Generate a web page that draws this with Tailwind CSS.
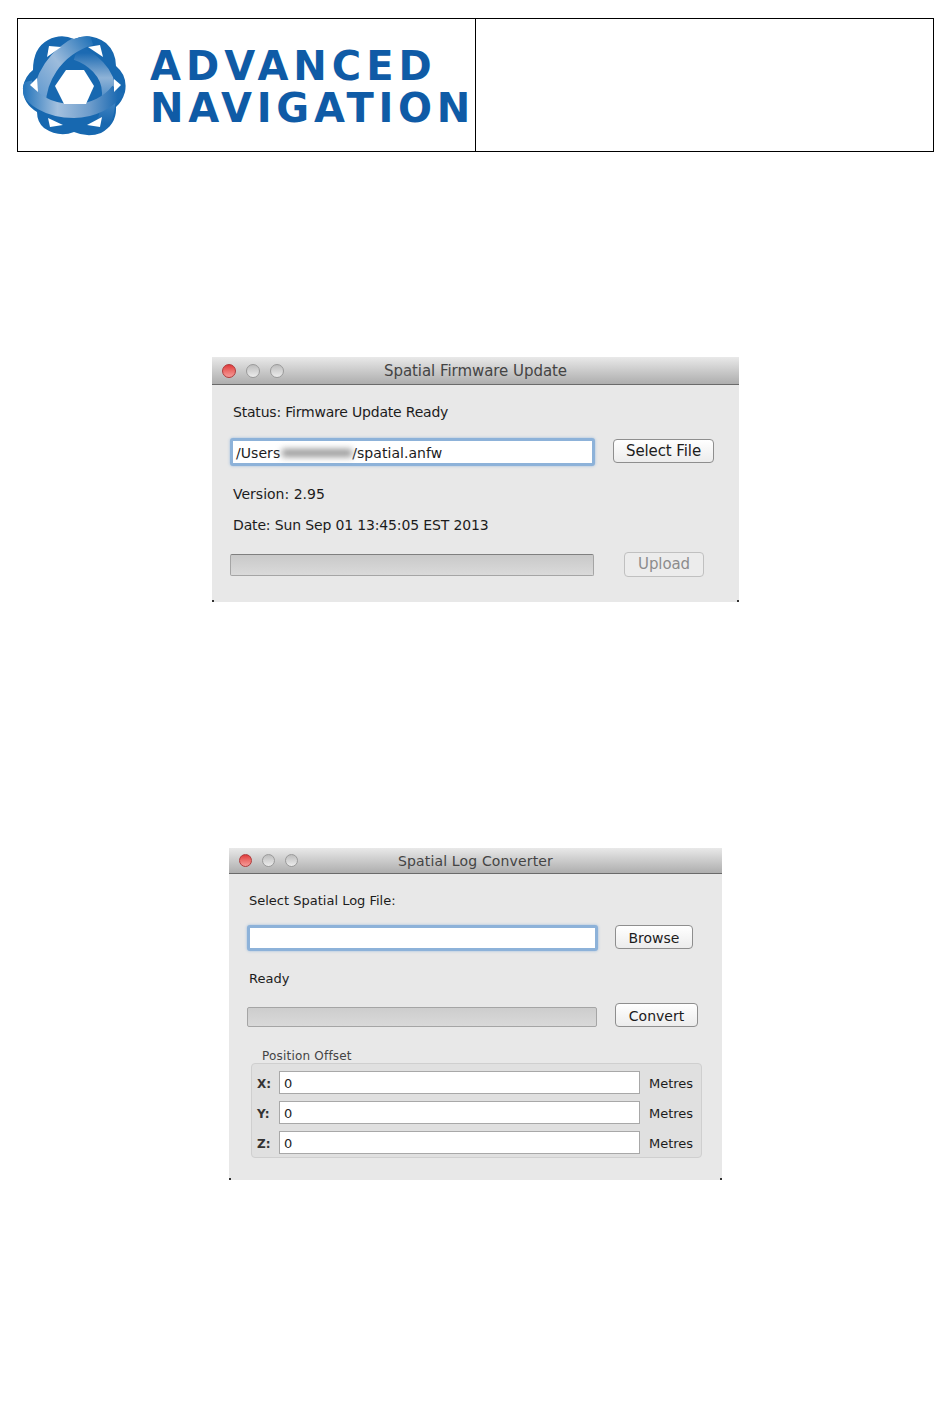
<!DOCTYPE html>
<html lang="en">
  <head>
    <meta charset="UTF-8">
    <script src="https://cdn.jsdelivr.net/npm/@tailwindcss/browser@4"></script>
    <title>Spatial Firmware Update</title>
  </head>
  <body class="bg-white w-[950px] h-[1419px] overflow-hidden font-['DejaVu_Sans',sans-serif] text-[#1c1c1c]">
    <!-- Page header -->
    <div class="ml-[17px] mt-[18px] w-[917px] h-[134px] border border-black flex">
      <div class="w-[458px] h-full border-r border-black flex items-center shrink-0">
        <svg class="ml-[4px] shrink-0" width="106" height="102" viewBox="21 34 106 102" fill="none">
          <defs>
            <linearGradient id="bandA" x1="0" y1="0" x2="1" y2="0">
              <stop offset="0" stop-color="#2a78bd"/><stop offset="0.35" stop-color="#a3c0de"/><stop offset="0.7" stop-color="#6d9ccb"/><stop offset="1" stop-color="#1c6ab2"/>
            </linearGradient>
            <linearGradient id="bandB" x1="0" y1="1" x2="1" y2="0">
              <stop offset="0" stop-color="#5d97ce"/><stop offset="0.5" stop-color="#9dbcdc"/><stop offset="1" stop-color="#2272b8"/>
            </linearGradient>
            <linearGradient id="bandC" x1="0" y1="0" x2="0" y2="1">
              <stop offset="0" stop-color="#1c6ab2"/><stop offset="0.35" stop-color="#8fb3d7"/><stop offset="0.7" stop-color="#3f83c2"/><stop offset="1" stop-color="#1766ae"/>
            </linearGradient>
            <clipPath id="logoEdge">
              <path d="M47 40 Q60 33 73 39 Q90 32 105 43 Q115 52 115 66 Q127 76 124 92 Q121 102 115 107 Q116 124 100 133 Q87 138 73 132 Q58 138 43 128 Q36 122 36 112 Q21 103 22 87 Q24 76 32 70 Q32 48 47 40 Z"/>
            </clipPath>
          </defs>
          <g clip-path="url(#logoEdge)">
            <rect x="21" y="32" width="106" height="106" fill="#1768b0"/>
            <path d="M75 53 C90 58 108 72 108 93 C108 105 106 115 102 124" stroke="url(#bandC)" stroke-width="14"/>
            <path d="M38 104 C38 82 52 50 90 38" stroke="url(#bandB)" stroke-width="14"/>
            <path d="M24 82 C28 100 48 111 73 111 C92 111 108 102 117 90" stroke="url(#bandA)" stroke-width="14"/>
          </g>
          <g fill="#fff">
            <path d="M46 57 L48 46 L60 47 Z"/>
            <path d="M87 47 L99 45 L102 57 Z"/>
            <path d="M113 79 L120 85 L113 92 Z"/>
            <path d="M29 85 L36 78 L37 92 Z"/>
            <path d="M47 118 L62 125 L49 127 Z"/>
            <path d="M86 125 L101 117 L99 127 Z"/>
          </g>
          <path d="M54 86 L65 70 L83 70 L93 86 L85 104 L63 104 Z" fill="#fff"/>
        </svg>
        <div class="ml-[22px] pt-[4px] font-['DejaVu_Sans',sans-serif] font-bold text-[#0f5ba6] leading-[42px] text-[40px]">
          <div class="tracking-[5px] whitespace-nowrap h-[42px]">ADVANCED</div>
          <div class="tracking-[4.7px] whitespace-nowrap h-[42px]">NAVIGATION</div>
        </div>
      </div>
      <div class="flex-1"></div>
    </div>

    <!-- Firmware update window -->
    <div class="relative ml-[212px] mt-[205px] w-[527px] h-[245px] bg-[#e8e8e8]">
      <div class="absolute left-0 top-0 w-[2px] h-[2px] bg-[#333]"></div>
      <div class="absolute right-0 top-0 w-[2px] h-[2px] bg-[#333]"></div>
      <div class="absolute left-0 bottom-0 w-[2px] h-[2px] bg-[#333]"></div>
      <div class="absolute right-0 bottom-0 w-[2px] h-[2px] bg-[#333]"></div>
      <div class="relative h-[28px] bg-gradient-to-b from-[#e9e9e9] to-[#aeaeae] border-b border-[#6a6a6a] flex items-center pl-[10px] gap-[10px]">
        <div class="w-[14px] h-[14px] rounded-full border border-[#b03a3a] bg-gradient-to-b from-[#e0383c] to-[#f49a98]"></div>
        <div class="w-[14px] h-[14px] rounded-full border border-[#9a9a9a] bg-gradient-to-b from-[#bdbdbd] to-[#ececec]"></div>
        <div class="w-[14px] h-[14px] rounded-full border border-[#9a9a9a] bg-gradient-to-b from-[#bdbdbd] to-[#ececec]"></div>
        <div class="absolute inset-0 pt-[2px] flex items-center justify-center text-[15px] tracking-[-0.05px] text-[#444]">Spatial Firmware Update</div>
      </div>
      <div class="pl-[18px] pt-[16px]">
        <div class="ml-[3px] h-[22px] leading-[22px] text-[14px] tracking-[-0.2px]">Status: Firmware Update Ready</div>
        <div class="mt-[15px] flex items-start">
          <div class="w-[365px] h-[28px] pt-[2px] bg-white border-[3px] border-[#8db2d9] rounded-[3px] shadow-[0_0_3px_#9dbbdc] flex items-center pl-[3px] text-[14px] tracking-[0.05px]">
            <span>/Users</span>
            <span class="w-[70px] h-[8px] mx-[2px] bg-[#999] blur-[3px]"></span>
            <span class="-ml-[2px]">/spatial.anfw</span>
          </div>
          <div class="ml-[18px] mt-[1px] w-[101px] h-[24px] bg-gradient-to-b from-white to-[#ececec] border border-[#8e8e8e] rounded-[4px] flex items-center justify-center text-[15px] tracking-[-0.1px]">Select File</div>
        </div>
        <div class="ml-[3px] mt-[17px] h-[22px] leading-[22px] text-[14px]">Version: 2.95</div>
        <div class="ml-[3px] mt-[9px] h-[22px] leading-[22px] text-[14px] tracking-[-0.15px]">Date: Sun Sep 01 13:45:05 EST 2013</div>
        <div class="mt-[16px] flex items-start">
          <div class="mt-[2px] w-[364px] h-[22px] bg-gradient-to-b from-[#c9c9c9] to-[#dadada] border border-[#a5a5a5] border-t-[#7f7f7f] rounded-[2px]"></div>
          <div class="ml-[30px] w-[80px] h-[25px] bg-[#ececec] border border-[#c0c0c0] rounded-[4px] flex items-center justify-center text-[15px] tracking-[-0.1px] text-[#8c8c8c]">Upload</div>
        </div>
      </div>
    </div>

    <!-- Log converter window -->
    <div class="relative ml-[229px] mt-[246px] w-[493px] h-[332px] bg-[#e8e8e8]">
      <div class="absolute left-0 top-0 w-[2px] h-[2px] bg-[#333]"></div>
      <div class="absolute right-0 top-0 w-[2px] h-[2px] bg-[#c77]"></div>
      <div class="absolute left-0 bottom-0 w-[2px] h-[2px] bg-[#333]"></div>
      <div class="absolute right-0 bottom-0 w-[2px] h-[2px] bg-[#333]"></div>
      <div class="relative h-[26px] bg-gradient-to-b from-[#e9e9e9] to-[#aeaeae] border-b border-[#6a6a6a] flex items-center pl-[10px] gap-[10px]">
        <div class="w-[13px] h-[13px] rounded-full border border-[#b03a3a] bg-gradient-to-b from-[#e0383c] to-[#f49a98]"></div>
        <div class="w-[13px] h-[13px] rounded-full border border-[#9a9a9a] bg-gradient-to-b from-[#bdbdbd] to-[#ececec]"></div>
        <div class="w-[13px] h-[13px] rounded-full border border-[#9a9a9a] bg-gradient-to-b from-[#bdbdbd] to-[#ececec]"></div>
        <div class="absolute inset-0 pt-[2px] flex items-center justify-center text-[14px] tracking-[0.15px] text-[#444]">Spatial Log Converter</div>
      </div>
      <div class="pl-[18px] pt-[17px]">
        <div class="ml-[2px] h-[20px] leading-[20px] text-[13px]">Select Spatial Log File:</div>
        <div class="mt-[14px] flex items-start">
          <div class="w-[351px] h-[26px] bg-white border-[3px] border-[#8db2d9] rounded-[3px] shadow-[0_0_3px_#9dbbdc]"></div>
          <div class="ml-[17px] w-[78px] h-[24px] pt-[2px] bg-gradient-to-b from-white to-[#ececec] border border-[#8e8e8e] rounded-[4px] flex items-center justify-center text-[14px]">Browse</div>
        </div>
        <div class="ml-[2px] mt-[18px] h-[20px] leading-[20px] text-[13px]">Ready</div>
        <div class="mt-[14px] flex items-start">
          <div class="mt-[4px] w-[350px] h-[20px] bg-gradient-to-b from-[#cdcdcd] to-[#d9d9d9] border border-[#a5a5a5] rounded-[2px]"></div>
          <div class="ml-[18px] w-[83px] h-[24px] pt-[2px] bg-gradient-to-b from-white to-[#ececec] border border-[#8e8e8e] rounded-[4px] flex items-center justify-center text-[14px]">Convert</div>
        </div>
        <div class="ml-[15px] mt-[20px] h-[16px] pt-[1px] leading-[16px] text-[12px] tracking-[0.2px] text-[#444]">Position Offset</div>
        <div class="ml-[4px] w-[451px] h-[95px] bg-[#e0e0e0] border border-[#cfcfcf] rounded-[4px] pt-[7px] flex flex-col gap-[7px] text-[13px]">
          <div class="flex items-center h-[23px]">
            <span class="w-[27px] pl-[5px] text-[12px] font-bold text-[#333] pt-[2px]">X:</span>
            <div class="w-[361px] h-[23px] pt-[2px] bg-white border border-[#a8a8a8] flex items-center pl-[4px]">0</div>
            <span class="ml-[9px] pt-[2px]">Metres</span>
          </div>
          <div class="flex items-center h-[23px]">
            <span class="w-[27px] pl-[5px] text-[12px] font-bold text-[#333] pt-[2px]">Y:</span>
            <div class="w-[361px] h-[23px] pt-[2px] bg-white border border-[#a8a8a8] flex items-center pl-[4px]">0</div>
            <span class="ml-[9px] pt-[2px]">Metres</span>
          </div>
          <div class="flex items-center h-[23px]">
            <span class="w-[27px] pl-[5px] text-[12px] font-bold text-[#333] pt-[2px]">Z:</span>
            <div class="w-[361px] h-[23px] pt-[2px] bg-white border border-[#a8a8a8] flex items-center pl-[4px]">0</div>
            <span class="ml-[9px] pt-[2px]">Metres</span>
          </div>
        </div>
      </div>
    </div>
  </body>
</html>
